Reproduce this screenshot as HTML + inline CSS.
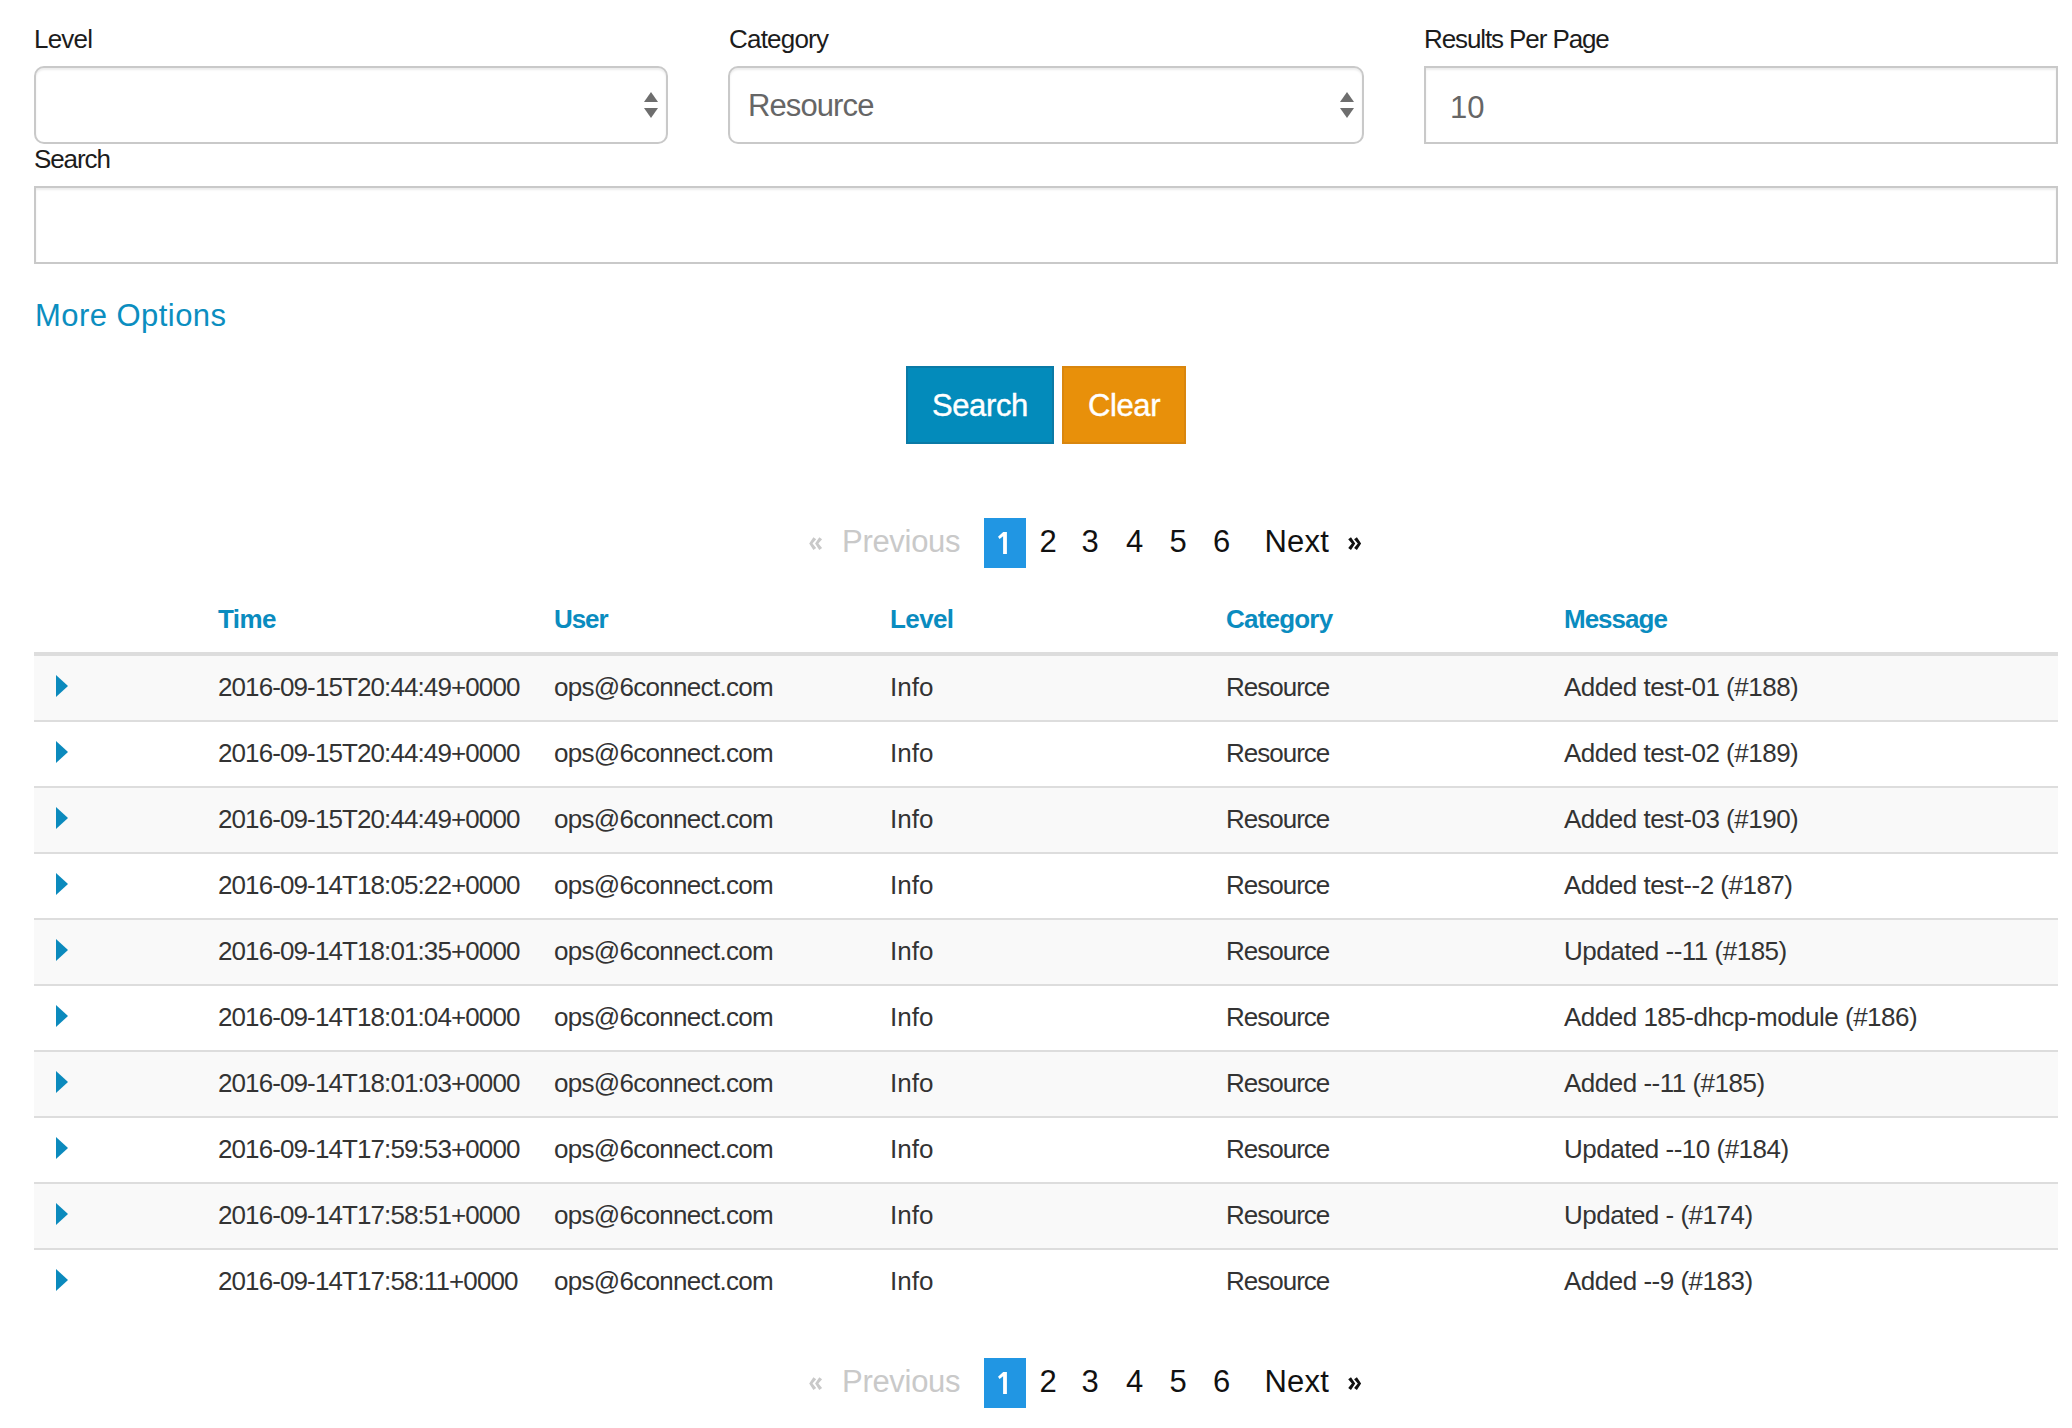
<!DOCTYPE html>
<html><head><meta charset="utf-8"><style>
html,body{margin:0;padding:0;background:#fff;width:2072px;height:1428px;overflow:hidden;position:relative}
body{font-family:"Liberation Sans",sans-serif}
.t{position:absolute;line-height:1;white-space:pre}
.box{position:absolute;box-sizing:border-box}
.inp{position:absolute;box-sizing:border-box;border:2px solid #c9c9c9;background:#fff;box-shadow:inset 0 2px 2px rgba(0,0,0,.075)}
.sel{border-radius:10px}
.arr{position:absolute;width:0;height:0;border-left:7px solid transparent;border-right:7px solid transparent}
.up{border-bottom:10.5px solid #6e6e6e}
.dn{border-top:10.5px solid #6e6e6e}
.tri{position:absolute;width:0;height:0;border-top:11px solid transparent;border-bottom:11px solid transparent;border-left:12px solid #0b8abd}
</style></head><body>
<div class="t" style="left:34.0px;top:26.0px;font-size:26px;color:#1c1c1c;font-weight:normal;letter-spacing:-0.8px;">Level</div>
<div class="t" style="left:729.0px;top:26.0px;font-size:26px;color:#1c1c1c;font-weight:normal;letter-spacing:-0.8px;">Category</div>
<div class="t" style="left:1424.0px;top:26.0px;font-size:26px;color:#1c1c1c;font-weight:normal;letter-spacing:-1.1px;">Results Per Page</div>
<div class="t" style="left:34.0px;top:146.0px;font-size:26px;color:#1c1c1c;font-weight:normal;letter-spacing:-1.1px;">Search</div>
<div class="inp sel" style="left:34px;top:66px;width:634px;height:78px"></div>
<div class="arr up" style="left:644px;top:91.5px"></div>
<div class="arr dn" style="left:644px;top:107.8px"></div>
<div class="inp sel" style="left:728px;top:66px;width:636px;height:78px"></div>
<div class="arr up" style="left:1340px;top:91.5px"></div>
<div class="arr dn" style="left:1340px;top:107.8px"></div>
<div class="t" style="left:748.0px;top:89.5px;font-size:31px;color:#666;font-weight:normal;letter-spacing:-0.9px;">Resource</div>
<div class="inp" style="left:1424px;top:66px;width:634px;height:78px"></div>
<div class="t" style="left:1450.0px;top:91.5px;font-size:31px;color:#666;font-weight:normal;letter-spacing:0px;">10</div>
<div class="inp" style="left:34px;top:186px;width:2024px;height:78px"></div>
<div class="t" style="left:35.0px;top:299.8px;font-size:31px;color:#0b8ec0;font-weight:normal;letter-spacing:0.45px;">More Options</div>
<div class="box" style="left:906px;top:366px;width:148px;height:78px;background:#038bbb;border:2px solid #0a7aa6"></div>
<div class="box" style="left:1062px;top:366px;width:124px;height:78px;background:#e8900a;border:2px solid #d9860e"></div>
<div class="t" style="left:932.0px;top:389.8px;font-size:31px;color:#fff;font-weight:normal;letter-spacing:-0.4px;-webkit-text-stroke:0.4px #fff;">Search</div>
<div class="t" style="left:1088.0px;top:389.8px;font-size:31px;color:#fff;font-weight:normal;letter-spacing:-0.4px;-webkit-text-stroke:0.4px #fff;">Clear</div>
<svg class="box" style="left:808.6px;top:537.4px" width="15" height="14" viewBox="0 0 15 14"><polygon fill="#c9c9c9" points="13.10,2.20 10.30,0.20 6.10,6.50 10.30,12.90 13.10,10.90 9.40,6.50"/><polygon fill="#c9c9c9" points="7.20,2.20 4.40,0.20 0.20,6.50 4.40,12.90 7.20,10.90 3.50,6.50"/></svg>
<div class="t" style="left:842.0px;top:525.8px;font-size:31px;color:#c9c9c9;font-weight:normal;letter-spacing:-0.3px;">Previous</div>
<div class="box" style="left:984px;top:518px;width:42px;height:50px;background:#2196e3"></div>
<svg class="box" style="left:984px;top:518px" width="42" height="50" viewBox="0 0 42 50"><polygon fill="#fff" points="19.2,14 22.9,14 22.9,35.9 19.1,35.9 19.1,18.3 15.6,21.1 14,18.7"/></svg>
<div class="t" style="left:1039.5px;top:525.8px;font-size:31px;color:#111;font-weight:normal;letter-spacing:0px;">2</div>
<div class="t" style="left:1081.5px;top:525.8px;font-size:31px;color:#111;font-weight:normal;letter-spacing:0px;">3</div>
<div class="t" style="left:1126.0px;top:525.8px;font-size:31px;color:#111;font-weight:normal;letter-spacing:0px;">4</div>
<div class="t" style="left:1169.5px;top:525.8px;font-size:31px;color:#111;font-weight:normal;letter-spacing:0px;">5</div>
<div class="t" style="left:1213.0px;top:525.8px;font-size:31px;color:#111;font-weight:normal;letter-spacing:0px;">6</div>
<div class="t" style="left:1264.5px;top:525.8px;font-size:31px;color:#111;font-weight:normal;letter-spacing:0.2px;">Next</div>
<svg class="box" style="left:1348.4px;top:537.4px" width="15" height="14" viewBox="0 0 15 14"><polygon fill="#111" points="0.20,2.20 3.00,0.20 7.20,6.50 3.00,12.90 0.20,10.90 3.90,6.50"/><polygon fill="#111" points="6.10,2.20 8.90,0.20 13.10,6.50 8.90,12.90 6.10,10.90 9.80,6.50"/></svg>
<svg class="box" style="left:808.6px;top:1377.4px" width="15" height="14" viewBox="0 0 15 14"><polygon fill="#c9c9c9" points="13.10,2.20 10.30,0.20 6.10,6.50 10.30,12.90 13.10,10.90 9.40,6.50"/><polygon fill="#c9c9c9" points="7.20,2.20 4.40,0.20 0.20,6.50 4.40,12.90 7.20,10.90 3.50,6.50"/></svg>
<div class="t" style="left:842.0px;top:1365.8px;font-size:31px;color:#c9c9c9;font-weight:normal;letter-spacing:-0.3px;">Previous</div>
<div class="box" style="left:984px;top:1358px;width:42px;height:50px;background:#2196e3"></div>
<svg class="box" style="left:984px;top:1358px" width="42" height="50" viewBox="0 0 42 50"><polygon fill="#fff" points="19.2,14 22.9,14 22.9,35.9 19.1,35.9 19.1,18.3 15.6,21.1 14,18.7"/></svg>
<div class="t" style="left:1039.5px;top:1365.8px;font-size:31px;color:#111;font-weight:normal;letter-spacing:0px;">2</div>
<div class="t" style="left:1081.5px;top:1365.8px;font-size:31px;color:#111;font-weight:normal;letter-spacing:0px;">3</div>
<div class="t" style="left:1126.0px;top:1365.8px;font-size:31px;color:#111;font-weight:normal;letter-spacing:0px;">4</div>
<div class="t" style="left:1169.5px;top:1365.8px;font-size:31px;color:#111;font-weight:normal;letter-spacing:0px;">5</div>
<div class="t" style="left:1213.0px;top:1365.8px;font-size:31px;color:#111;font-weight:normal;letter-spacing:0px;">6</div>
<div class="t" style="left:1264.5px;top:1365.8px;font-size:31px;color:#111;font-weight:normal;letter-spacing:0.2px;">Next</div>
<svg class="box" style="left:1348.4px;top:1377.4px" width="15" height="14" viewBox="0 0 15 14"><polygon fill="#111" points="0.20,2.20 3.00,0.20 7.20,6.50 3.00,12.90 0.20,10.90 3.90,6.50"/><polygon fill="#111" points="6.10,2.20 8.90,0.20 13.10,6.50 8.90,12.90 6.10,10.90 9.80,6.50"/></svg>
<div class="t" style="left:218.0px;top:606.0px;font-size:26px;color:#0a8cbf;font-weight:bold;letter-spacing:-0.6px;">Time</div>
<div class="t" style="left:554.0px;top:606.0px;font-size:26px;color:#0a8cbf;font-weight:bold;letter-spacing:-1.1px;">User</div>
<div class="t" style="left:890.0px;top:606.0px;font-size:26px;color:#0a8cbf;font-weight:bold;letter-spacing:-0.6px;">Level</div>
<div class="t" style="left:1226.0px;top:606.0px;font-size:26px;color:#0a8cbf;font-weight:bold;letter-spacing:-0.8px;">Category</div>
<div class="t" style="left:1564.0px;top:606.0px;font-size:26px;color:#0a8cbf;font-weight:bold;letter-spacing:-1.0px;">Message</div>
<div class="box" style="left:34px;top:652px;width:2024px;height:4px;background:#dddddd"></div>
<div class="box" style="left:34px;top:656px;width:2024px;height:64px;background:#f9f9f9"></div>
<div class="tri" style="left:56px;top:675px"></div>
<div class="t" style="left:218.0px;top:674.0px;font-size:26px;color:#333;font-weight:normal;letter-spacing:-0.9px;">2016-09-15T20:44:49+0000</div>
<div class="t" style="left:554.0px;top:674.0px;font-size:26px;color:#333;font-weight:normal;letter-spacing:-0.7px;">ops@6connect.com</div>
<div class="t" style="left:890.0px;top:674.0px;font-size:26px;color:#333;font-weight:normal;letter-spacing:0px;">Info</div>
<div class="t" style="left:1226.0px;top:674.0px;font-size:26px;color:#333;font-weight:normal;letter-spacing:-1.0px;">Resource</div>
<div class="t" style="left:1564.0px;top:674.0px;font-size:26px;color:#333;font-weight:normal;letter-spacing:-0.5px;">Added test-01 (#188)</div>
<div class="box" style="left:34px;top:720px;width:2024px;height:2px;background:#dddddd"></div>
<div class="tri" style="left:56px;top:741px"></div>
<div class="t" style="left:218.0px;top:740.0px;font-size:26px;color:#333;font-weight:normal;letter-spacing:-0.9px;">2016-09-15T20:44:49+0000</div>
<div class="t" style="left:554.0px;top:740.0px;font-size:26px;color:#333;font-weight:normal;letter-spacing:-0.7px;">ops@6connect.com</div>
<div class="t" style="left:890.0px;top:740.0px;font-size:26px;color:#333;font-weight:normal;letter-spacing:0px;">Info</div>
<div class="t" style="left:1226.0px;top:740.0px;font-size:26px;color:#333;font-weight:normal;letter-spacing:-1.0px;">Resource</div>
<div class="t" style="left:1564.0px;top:740.0px;font-size:26px;color:#333;font-weight:normal;letter-spacing:-0.5px;">Added test-02 (#189)</div>
<div class="box" style="left:34px;top:788px;width:2024px;height:64px;background:#f9f9f9"></div>
<div class="box" style="left:34px;top:786px;width:2024px;height:2px;background:#dddddd"></div>
<div class="tri" style="left:56px;top:807px"></div>
<div class="t" style="left:218.0px;top:806.0px;font-size:26px;color:#333;font-weight:normal;letter-spacing:-0.9px;">2016-09-15T20:44:49+0000</div>
<div class="t" style="left:554.0px;top:806.0px;font-size:26px;color:#333;font-weight:normal;letter-spacing:-0.7px;">ops@6connect.com</div>
<div class="t" style="left:890.0px;top:806.0px;font-size:26px;color:#333;font-weight:normal;letter-spacing:0px;">Info</div>
<div class="t" style="left:1226.0px;top:806.0px;font-size:26px;color:#333;font-weight:normal;letter-spacing:-1.0px;">Resource</div>
<div class="t" style="left:1564.0px;top:806.0px;font-size:26px;color:#333;font-weight:normal;letter-spacing:-0.5px;">Added test-03 (#190)</div>
<div class="box" style="left:34px;top:852px;width:2024px;height:2px;background:#dddddd"></div>
<div class="tri" style="left:56px;top:873px"></div>
<div class="t" style="left:218.0px;top:872.0px;font-size:26px;color:#333;font-weight:normal;letter-spacing:-0.9px;">2016-09-14T18:05:22+0000</div>
<div class="t" style="left:554.0px;top:872.0px;font-size:26px;color:#333;font-weight:normal;letter-spacing:-0.7px;">ops@6connect.com</div>
<div class="t" style="left:890.0px;top:872.0px;font-size:26px;color:#333;font-weight:normal;letter-spacing:0px;">Info</div>
<div class="t" style="left:1226.0px;top:872.0px;font-size:26px;color:#333;font-weight:normal;letter-spacing:-1.0px;">Resource</div>
<div class="t" style="left:1564.0px;top:872.0px;font-size:26px;color:#333;font-weight:normal;letter-spacing:-0.5px;">Added test--2 (#187)</div>
<div class="box" style="left:34px;top:920px;width:2024px;height:64px;background:#f9f9f9"></div>
<div class="box" style="left:34px;top:918px;width:2024px;height:2px;background:#dddddd"></div>
<div class="tri" style="left:56px;top:939px"></div>
<div class="t" style="left:218.0px;top:938.0px;font-size:26px;color:#333;font-weight:normal;letter-spacing:-0.9px;">2016-09-14T18:01:35+0000</div>
<div class="t" style="left:554.0px;top:938.0px;font-size:26px;color:#333;font-weight:normal;letter-spacing:-0.7px;">ops@6connect.com</div>
<div class="t" style="left:890.0px;top:938.0px;font-size:26px;color:#333;font-weight:normal;letter-spacing:0px;">Info</div>
<div class="t" style="left:1226.0px;top:938.0px;font-size:26px;color:#333;font-weight:normal;letter-spacing:-1.0px;">Resource</div>
<div class="t" style="left:1564.0px;top:938.0px;font-size:26px;color:#333;font-weight:normal;letter-spacing:-0.5px;">Updated --11 (#185)</div>
<div class="box" style="left:34px;top:984px;width:2024px;height:2px;background:#dddddd"></div>
<div class="tri" style="left:56px;top:1005px"></div>
<div class="t" style="left:218.0px;top:1004.0px;font-size:26px;color:#333;font-weight:normal;letter-spacing:-0.9px;">2016-09-14T18:01:04+0000</div>
<div class="t" style="left:554.0px;top:1004.0px;font-size:26px;color:#333;font-weight:normal;letter-spacing:-0.7px;">ops@6connect.com</div>
<div class="t" style="left:890.0px;top:1004.0px;font-size:26px;color:#333;font-weight:normal;letter-spacing:0px;">Info</div>
<div class="t" style="left:1226.0px;top:1004.0px;font-size:26px;color:#333;font-weight:normal;letter-spacing:-1.0px;">Resource</div>
<div class="t" style="left:1564.0px;top:1004.0px;font-size:26px;color:#333;font-weight:normal;letter-spacing:-0.5px;">Added 185-dhcp-module (#186)</div>
<div class="box" style="left:34px;top:1052px;width:2024px;height:64px;background:#f9f9f9"></div>
<div class="box" style="left:34px;top:1050px;width:2024px;height:2px;background:#dddddd"></div>
<div class="tri" style="left:56px;top:1071px"></div>
<div class="t" style="left:218.0px;top:1070.0px;font-size:26px;color:#333;font-weight:normal;letter-spacing:-0.9px;">2016-09-14T18:01:03+0000</div>
<div class="t" style="left:554.0px;top:1070.0px;font-size:26px;color:#333;font-weight:normal;letter-spacing:-0.7px;">ops@6connect.com</div>
<div class="t" style="left:890.0px;top:1070.0px;font-size:26px;color:#333;font-weight:normal;letter-spacing:0px;">Info</div>
<div class="t" style="left:1226.0px;top:1070.0px;font-size:26px;color:#333;font-weight:normal;letter-spacing:-1.0px;">Resource</div>
<div class="t" style="left:1564.0px;top:1070.0px;font-size:26px;color:#333;font-weight:normal;letter-spacing:-0.5px;">Added --11 (#185)</div>
<div class="box" style="left:34px;top:1116px;width:2024px;height:2px;background:#dddddd"></div>
<div class="tri" style="left:56px;top:1137px"></div>
<div class="t" style="left:218.0px;top:1136.0px;font-size:26px;color:#333;font-weight:normal;letter-spacing:-0.9px;">2016-09-14T17:59:53+0000</div>
<div class="t" style="left:554.0px;top:1136.0px;font-size:26px;color:#333;font-weight:normal;letter-spacing:-0.7px;">ops@6connect.com</div>
<div class="t" style="left:890.0px;top:1136.0px;font-size:26px;color:#333;font-weight:normal;letter-spacing:0px;">Info</div>
<div class="t" style="left:1226.0px;top:1136.0px;font-size:26px;color:#333;font-weight:normal;letter-spacing:-1.0px;">Resource</div>
<div class="t" style="left:1564.0px;top:1136.0px;font-size:26px;color:#333;font-weight:normal;letter-spacing:-0.5px;">Updated --10 (#184)</div>
<div class="box" style="left:34px;top:1184px;width:2024px;height:64px;background:#f9f9f9"></div>
<div class="box" style="left:34px;top:1182px;width:2024px;height:2px;background:#dddddd"></div>
<div class="tri" style="left:56px;top:1203px"></div>
<div class="t" style="left:218.0px;top:1202.0px;font-size:26px;color:#333;font-weight:normal;letter-spacing:-0.9px;">2016-09-14T17:58:51+0000</div>
<div class="t" style="left:554.0px;top:1202.0px;font-size:26px;color:#333;font-weight:normal;letter-spacing:-0.7px;">ops@6connect.com</div>
<div class="t" style="left:890.0px;top:1202.0px;font-size:26px;color:#333;font-weight:normal;letter-spacing:0px;">Info</div>
<div class="t" style="left:1226.0px;top:1202.0px;font-size:26px;color:#333;font-weight:normal;letter-spacing:-1.0px;">Resource</div>
<div class="t" style="left:1564.0px;top:1202.0px;font-size:26px;color:#333;font-weight:normal;letter-spacing:-0.5px;">Updated - (#174)</div>
<div class="box" style="left:34px;top:1248px;width:2024px;height:2px;background:#dddddd"></div>
<div class="tri" style="left:56px;top:1269px"></div>
<div class="t" style="left:218.0px;top:1268.0px;font-size:26px;color:#333;font-weight:normal;letter-spacing:-0.9px;">2016-09-14T17:58:11+0000</div>
<div class="t" style="left:554.0px;top:1268.0px;font-size:26px;color:#333;font-weight:normal;letter-spacing:-0.7px;">ops@6connect.com</div>
<div class="t" style="left:890.0px;top:1268.0px;font-size:26px;color:#333;font-weight:normal;letter-spacing:0px;">Info</div>
<div class="t" style="left:1226.0px;top:1268.0px;font-size:26px;color:#333;font-weight:normal;letter-spacing:-1.0px;">Resource</div>
<div class="t" style="left:1564.0px;top:1268.0px;font-size:26px;color:#333;font-weight:normal;letter-spacing:-0.5px;">Added --9 (#183)</div>
</body></html>
